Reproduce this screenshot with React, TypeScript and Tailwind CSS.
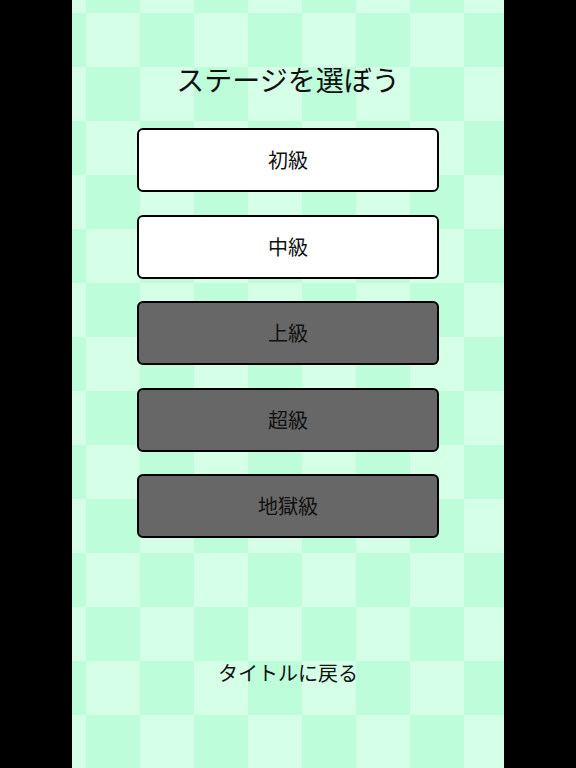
import React from "react";

const font = { fontFamily: '"Noto Sans CJK JP", "Noto Sans", sans-serif' };

export default function App() {
  const levels: { label: string; active: boolean }[] = [
    { label: "初級", active: true },
    { label: "中級", active: true },
    { label: "上級", active: false },
    { label: "超級", active: false },
    { label: "地獄級", active: false },
  ];
  return (
    <div className="flex h-[768px] w-[576px] justify-center bg-black" style={font}>
      <div className="flex h-[768px] w-[432px] flex-col items-center bg-[conic-gradient(#bdfdd9_90deg,#d6ffe7_90deg_180deg,#bdfdd9_180deg_270deg,#d6ffe7_270deg)] bg-[length:108px_108px] bg-[position:14px_13px]">
        <h1 className="mt-[61px] text-[28px] leading-9 font-normal text-[#111]">ステージを選ぼう</h1>
        <div className="mt-[31px] flex flex-col gap-[22.5px]">
          {levels.map((l) => (
            <button
              key={l.label}
              className={`flex h-16 w-[302px] items-center justify-center rounded-md border-2 border-black text-[20px] text-[#111] ${
                l.active ? "bg-white" : "bg-[#676767]"
              }`}
            >
              {l.label}
            </button>
          ))}
        </div>
        <div className="mt-auto mb-[81px] text-[20px] leading-7 text-[#111]">タイトルに戻る</div>
      </div>
    </div>
  );
}
